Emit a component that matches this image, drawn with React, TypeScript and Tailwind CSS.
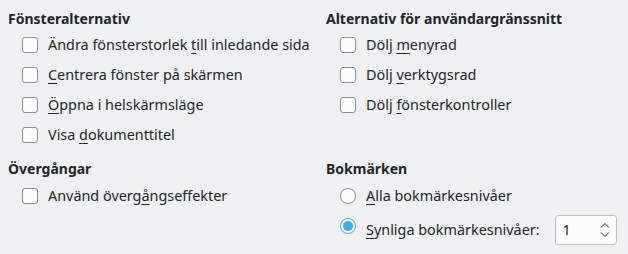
import React from "react";

const Check = ({ label }: { label: [string, string, string] }) => (
  <div className="flex h-[30px] items-center pl-[14px]">
    <span className="box-border h-[16px] w-[16px] rounded-[3px] border border-[#8d9094] bg-[#fcfcfc]" />
    <span className="ml-[10px] text-[14.4px] text-[#232629]">
      {label[0]}
      {label[1] && <span className="underline underline-offset-[3px] decoration-1">{label[1]}</span>}
      {label[2]}
    </span>
  </div>
);

const Heading = ({ children }: { children: React.ReactNode }) => (
  <div className="flex h-[20px] items-center text-[14px] font-bold text-[#232629]">{children}</div>
);

export default function App() {
  return (
    <div
      className="h-[254px] w-[628px] bg-[#eff0f1] pl-[8px] pt-[8px]"
      style={{ fontFamily: '"Noto Sans", sans-serif' }}
    >
      <div className="grid grid-cols-[318px_1fr]">
        <div>
          <Heading>Fönsteralternativ</Heading>
          <div className="mt-[2px]">
            <Check label={["Ändra fönsterstorlek ", "t", "ill inledande sida"]} />
            <Check label={["", "C", "entrera fönster på skärmen"]} />
            <Check label={["", "Ö", "ppna i helskärmsläge"]} />
            <Check label={["Visa ", "d", "okumenttitel"]} />
          </div>
        </div>
        <div>
          <Heading>Alternativ för användargränssnitt</Heading>
          <div className="mt-[2px]">
            <Check label={["Dölj ", "m", "enyrad"]} />
            <Check label={["Dölj ", "v", "erktygsrad"]} />
            <Check label={["Dölj ", "f", "önsterkontroller"]} />
          </div>
        </div>
        <div className="mt-[8px]">
          <Heading>Övergångar</Heading>
          <div className="mt-[3px]">
            <Check label={["Använd överg", "å", "ngseffekter"]} />
          </div>
        </div>
        <div className="mt-[8px]">
          <Heading>Bokmärken</Heading>
          <div className="mt-[3px]">
            <div className="flex h-[30px] items-center pl-[14px]">
              <span className="box-border h-[16px] w-[16px] rounded-full border border-[#8d9094] bg-[#fcfcfc]" />
              <span className="ml-[10px] text-[14.4px] text-[#232629]">
                <span className="underline underline-offset-[3px] decoration-1">A</span>lla bokmärkesnivåer
              </span>
            </div>
            <div className="flex items-start pl-[14px] pt-[4px]">
              <span className="mt-[3px] box-border flex h-[16px] w-[16px] items-center justify-center rounded-full border border-[#3daee9] bg-[#fcfcfc]">
                <span className="h-[10px] w-[10px] rounded-full bg-[#3daee9]" />
              </span>
              <span className="ml-[10px] text-[14.4px] leading-[30px] text-[#232629]">
                <span className="underline underline-offset-[3px] decoration-1">S</span>ynliga bokmärkesnivåer:
              </span>
              <div className="ml-[15px] box-border flex h-[30px] w-[62px] items-center justify-between rounded-[3px] border border-[#bcbebf] bg-[#fcfcfc] pl-[7px] pr-[5px] text-[14.4px] text-[#232629]">
                <span>1</span>
                <svg width="12" height="20" viewBox="0 0 12 20" fill="none" stroke="#232629" strokeWidth="1">
                  <path d="M2 7.5 L6 3.5 L10 7.5" />
                  <path d="M2 12.5 L6 16.5 L10 12.5" />
                </svg>
              </div>
            </div>
          </div>
        </div>
      </div>
    </div>
  );
}
